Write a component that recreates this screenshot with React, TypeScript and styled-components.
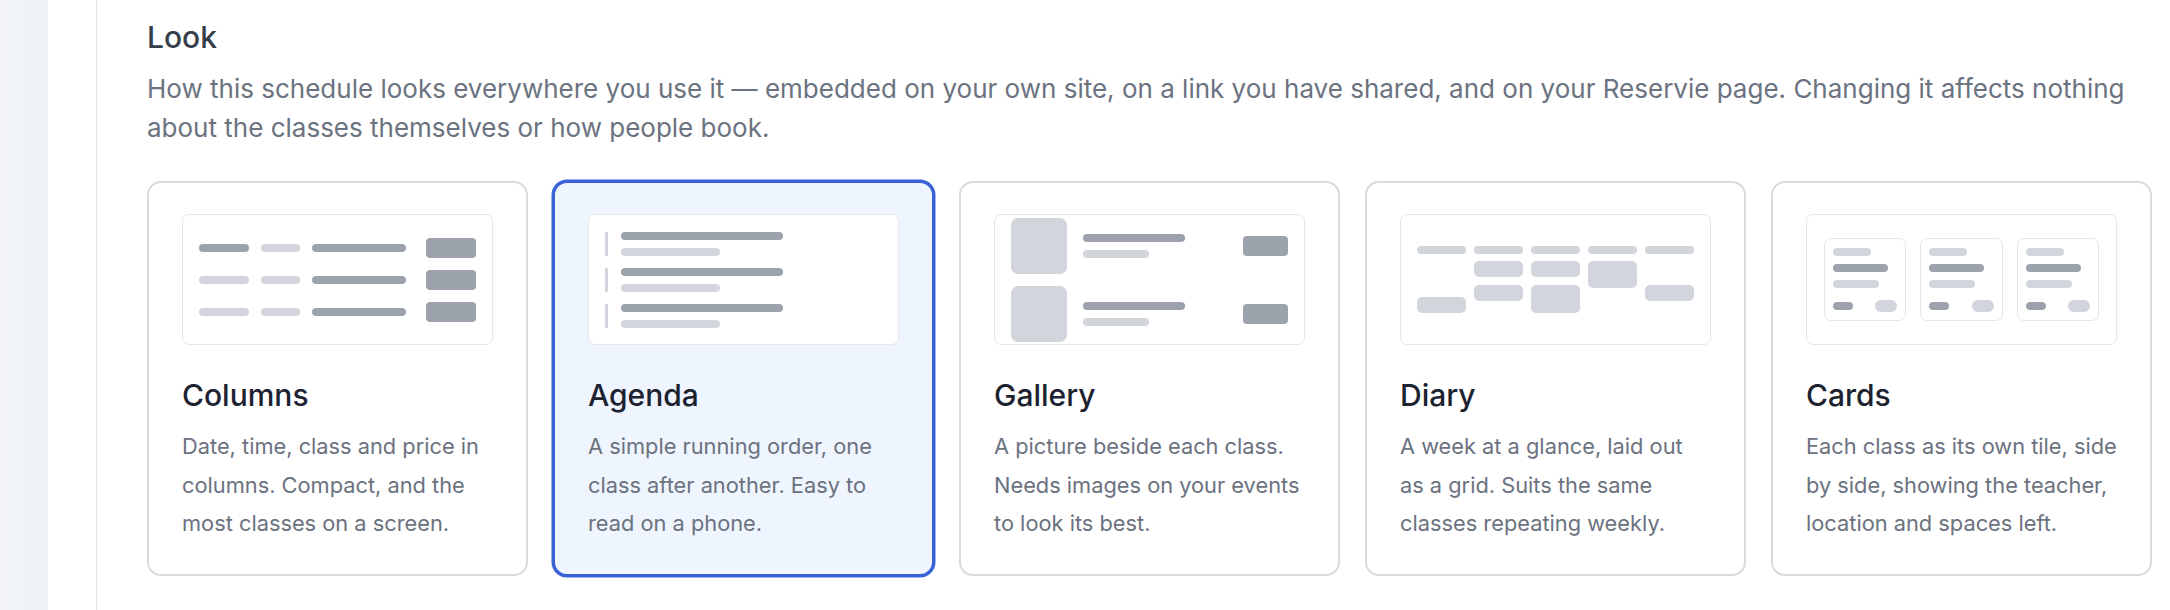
import React from "react";
import styled, { createGlobalStyle } from "styled-components";

const GlobalStyle = createGlobalStyle`
  html, body { margin: 0; padding: 0; background: #ffffff; }
  body { font-family: Inter, "Noto Sans", sans-serif; -webkit-font-smoothing: antialiased; }
  * { box-sizing: border-box; }
`;

const DARK = "#9ca2ac";
const LIGHT = "#d2d6dc";

const Page = styled.div`
  display: flex;
  min-height: 610px;
`;

const Rail = styled.div`
  width: 48px;
  flex: none;
  background: linear-gradient(90deg, #f3f5f9 0%, #eef1f6 100%);
`;

const Gutter = styled.div`
  width: 49px;
  flex: none;
  border-right: 1.5px solid #e4e6ea;
`;

const Main = styled.main`
  flex: 1;
  padding: 19px 17px 0 50px;
  min-width: 0;
`;

const Heading = styled.h2`
  margin: 0;
  font-size: 30px;
  line-height: 36px;
  font-weight: 500;
  color: #363d4b;
`;

const Lead = styled.p`
  margin: 14px 0 0;
  font-size: 26px;
  line-height: 39px;
  color: #6b7280;
  max-width: 2005px;
`;

const Options = styled.div`
  margin-top: 34px;
  display: grid;
  grid-template-columns: repeat(5, 381px);
  column-gap: 25px;
`;

const Option = styled.button<{ $selected?: boolean }>`
  all: unset;
  box-sizing: border-box;
  display: flex;
  flex-direction: column;
  height: 395px;
  padding: 31px 33px 31px;
  border-radius: 14px;
  border: 2px solid ${(p) => (p.$selected ? "#3a62d7" : "#d8dadd")};
  background: ${(p) => (p.$selected ? "#eff5fe" : "#ffffff")};
  box-shadow: ${(p) => (p.$selected ? "0 0 0 1.5px #3a62d7" : "none")};
  cursor: pointer;
`;

const Preview = styled.div<{ $pad?: number }>`
  height: 131px;
  flex: none;
  border: 1px solid #e5e7eb;
  border-radius: 7px;
  background: #ffffff;
  padding: 0 ${(p) => p.$pad ?? 16}px;
  display: flex;
  flex-direction: column;
  justify-content: center;
`;

const Title = styled.h3`
  margin: 32px 0 0;
  font-size: 30px;
  line-height: 36px;
  font-weight: 500;
  color: #1c2230;
`;

const Desc = styled.p`
  margin: 14px 0 0;
  font-size: 21.8px;
  line-height: 38.5px;
  color: #6b7280;
  white-space: nowrap;
`;

const Bar = styled.span<{ $w: number; $h?: number; $dark?: boolean; $r?: number }>`
  display: block;
  flex: none;
  width: ${(p) => p.$w}px;
  height: ${(p) => p.$h ?? 8}px;
  border-radius: ${(p) => p.$r ?? 4}px;
  background: ${(p) => (p.$dark ? DARK : LIGHT)};
`;

/* Columns */
const ColRows = styled.div`
  display: flex;
  flex-direction: column;
  gap: 12px;
`;
const ColRow = styled.div`
  display: flex;
  align-items: center;
  gap: 12px;
`;
const Price = styled(Bar)`
  margin-left: auto;
`;

/* Agenda */
const AgendaList = styled.div`
  display: flex;
  flex-direction: column;
  gap: 12px;
`;
const AgendaItem = styled.div`
  display: flex;
  gap: 13px;
`;
const Accent = styled.span`
  width: 3px;
  background: ${LIGHT};
`;
const Lines = styled.div<{ $gap?: number }>`
  display: flex;
  flex-direction: column;
  gap: ${(p) => p.$gap ?? 8}px;
`;

/* Gallery */
const GalleryList = styled.div`
  display: flex;
  flex-direction: column;
  gap: 12px;
`;
const GalleryRow = styled.div`
  display: flex;
  align-items: center;
  gap: 16px;
`;
const Thumb = styled.span`
  width: 56px;
  height: 56px;
  border-radius: 7px;
  background: ${LIGHT};
  flex: none;
`;

/* Diary */
const Week = styled.div`
  display: flex;
  align-items: flex-start;
  gap: 8px;
`;
const Day = styled.div`
  width: 49px;
  display: flex;
  flex-direction: column;
`;
const Slot = styled.span<{ $top: number; $h: number }>`
  display: block;
  margin-top: ${(p) => p.$top}px;
  height: ${(p) => p.$h}px;
  border-radius: 5px;
  background: ${LIGHT};
`;

/* Cards */
const Tiles = styled.div`
  display: flex;
  gap: 14px;
`;
const Tile = styled.div`
  flex: 1;
  height: 83px;
  border: 1.5px solid #e5e7eb;
  border-radius: 7px;
  padding: 8.5px 8px 8px;
  display: flex;
  flex-direction: column;
  gap: 8px;
`;
const TileFoot = styled.div`
  margin-top: auto;
  display: flex;
  align-items: center;
  justify-content: space-between;
`;

const ColumnsPreview = () => (
  <Preview>
    <ColRows>
      {[true, false, false].map((first, i) => (
        <ColRow key={i}>
          <Bar $w={50} $dark={first} />
          <Bar $w={39} />
          <Bar $w={94} $dark />
          <Price $w={50} $h={20} $r={4} $dark />
        </ColRow>
      ))}
    </ColRows>
  </Preview>
);

const AgendaPreview = () => (
  <Preview>
    <AgendaList>
      {[0, 1, 2].map((i) => (
        <AgendaItem key={i}>
          <Accent />
          <Lines>
            <Bar $w={162} $dark />
            <Bar $w={99} />
          </Lines>
        </AgendaItem>
      ))}
    </AgendaList>
  </Preview>
);

const GalleryPreview = () => (
  <Preview>
    <GalleryList>
      {[0, 1].map((i) => (
        <GalleryRow key={i}>
          <Thumb />
          <Lines>
            <Bar $w={102} $dark />
            <Bar $w={66} />
          </Lines>
          <Price $w={45} $h={20} $r={4} $dark />
        </GalleryRow>
      ))}
    </GalleryList>
  </Preview>
);

const diary: { top: number; h: number }[][] = [
  [{ top: 43, h: 16 }],
  [
    { top: 7, h: 16 },
    { top: 8, h: 16 },
  ],
  [
    { top: 7, h: 16 },
    { top: 8, h: 28 },
  ],
  [{ top: 7, h: 27 }],
  [{ top: 31, h: 16 }],
];

const DiaryPreview = () => (
  <Preview>
    <Week>
      {diary.map((slots, i) => (
        <Day key={i}>
          <Bar $w={49} />
          {slots.map((s, j) => (
            <Slot key={j} $top={s.top} $h={s.h} />
          ))}
        </Day>
      ))}
    </Week>
  </Preview>
);

const CardsPreview = () => (
  <Preview $pad={17}>
    <Tiles>
      {[0, 1, 2].map((i) => (
        <Tile key={i}>
          <Bar $w={38} />
          <Bar $w={55} $dark />
          <Bar $w={46} />
          <TileFoot>
            <Bar $w={20} $dark />
            <Bar $w={22} $h={12} $r={6} />
          </TileFoot>
        </Tile>
      ))}
    </Tiles>
  </Preview>
);

const layouts = [
  {
    name: "Columns",
    preview: <ColumnsPreview />,
    lines: ["Date, time, class and price in", "columns. Compact, and the", "most classes on a screen."],
  },
  {
    name: "Agenda",
    preview: <AgendaPreview />,
    lines: ["A simple running order, one", "class after another. Easy to", "read on a phone."],
    selected: true,
  },
  {
    name: "Gallery",
    preview: <GalleryPreview />,
    lines: ["A picture beside each class.", "Needs images on your events", "to look its best."],
  },
  {
    name: "Diary",
    preview: <DiaryPreview />,
    lines: ["A week at a glance, laid out", "as a grid. Suits the same", "classes repeating weekly."],
  },
  {
    name: "Cards",
    preview: <CardsPreview />,
    lines: ["Each class as its own tile, side", "by side, showing the teacher,", "location and spaces left."],
  },
];

export default function App() {
  return (
    <>
      <GlobalStyle />
      <Page>
        <Rail />
        <Gutter />
        <Main>
          <Heading>Look</Heading>
          <Lead>
            How this schedule looks everywhere you use it — embedded on your own site, on a link you have shared,
            and on your Reservie page. Changing it affects nothing about the classes themselves or how people book.
          </Lead>
          <Options>
            {layouts.map((l) => (
              <Option key={l.name} $selected={l.selected} aria-pressed={!!l.selected}>
                {l.preview}
                <Title>{l.name}</Title>
                <Desc>
                  {l.lines.map((line, i) => (
                    <React.Fragment key={i}>
                      {line}
                      {i < l.lines.length - 1 && <br />}
                    </React.Fragment>
                  ))}
                </Desc>
              </Option>
            ))}
          </Options>
        </Main>
      </Page>
    </>
  );
}
